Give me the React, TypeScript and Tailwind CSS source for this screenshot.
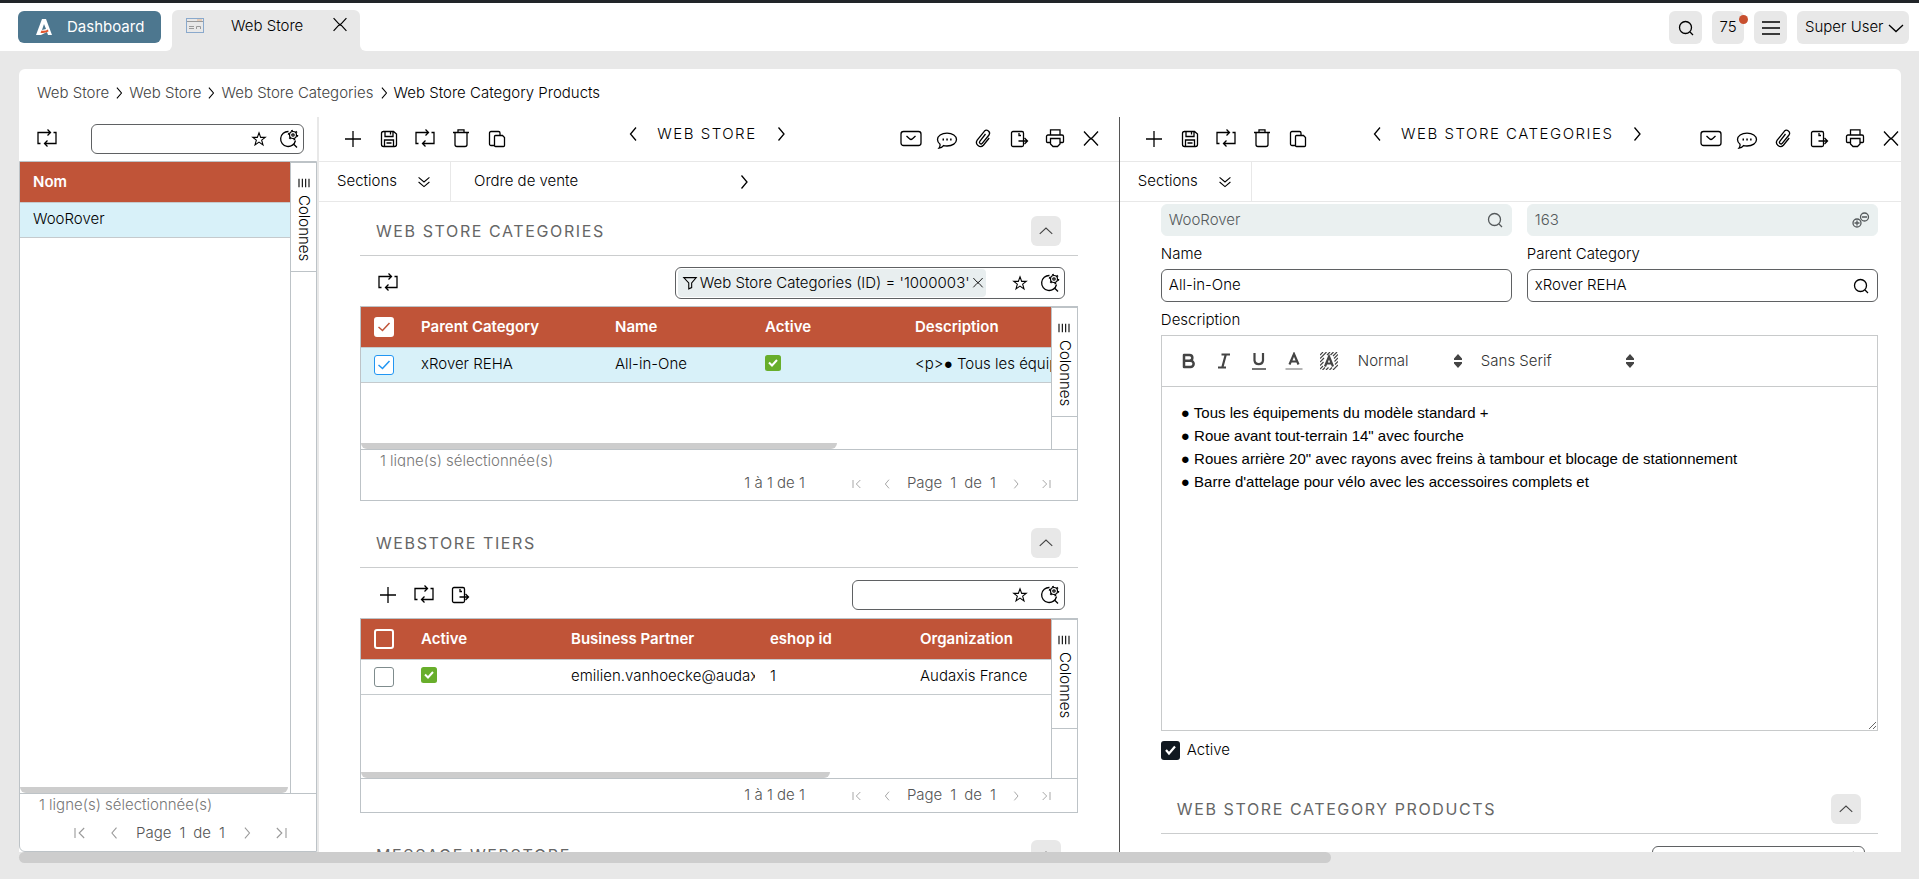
import { useState } from "react";
import type { ReactNode } from "react";
import clsx from "clsx";

const ICONS: Record<string, ReactNode> = {
  plus: <path d="M4 12H20M12 4V20" />,
  save: (
    <path d="M6 4.5H16.5L19.5 7V17.5a2 2 0 0 1-2 2H6.5a2 2 0 0 1-2-2V6.5a2 2 0 0 1 2-2ZM8 5V9.5H16V5M13.5 5V7.5M7.5 19V13H16.5V19M9.5 16H14.5" />
  ),
  refresh: (
    <path d="M5.5 16.5H3V5.5H15.5M12.5 2.5L15.5 5.5L12.5 8.5M18.5 5.5H21V16.5H9.5M12.5 13.5L9.5 16.5L12.5 19.5" />
  ),
  trash: (
    <path d="M4 5.5H20M9 5V2.8H15V5M6 6V17.5a2 2 0 0 0 2 2H16a2 2 0 0 0 2-2V6" />
  ),
  copy: (
    <path d="M9.5 18.5H6a1.5 1.5 0 0 1-1.5-1.5V6a1.5 1.5 0 0 1 1.5-1.5H13.5a1.5 1.5 0 0 1 1.5 1.5V8.5M10.5 8.5H17.5L19.5 10.5V18.5a1 1 0 0 1-1 1H10.5a1 1 0 0 1-1-1V9.5a1 1 0 0 1 1-1Z" />
  ),
  mail: (
    <>
      <rect x="2" y="4.5" width="20" height="14" rx="2.5" />
      <path d="M7.5 9L10.5 11.8a2.2 2.2 0 0 0 3 0L16.5 9" />
    </>
  ),
  chat: (
    <>
      <path d="M5 17.2C3.2 16 2.5 14.3 2.5 12.6C2.5 9 6.5 6.2 12 6.2S21.5 9 21.5 12.6S17.5 19 12 19C10.7 19 9.5 18.9 8.5 18.6C7.5 20 6 21 4 21.2C5 20 5.3 18.5 5 17.2Z" />
      <path d="M7.5 12.5h1.5M11.3 12.5h1.5M15.1 12.5h1.5" strokeWidth="2" />
    </>
  ),
  clip: (
    <path d="M14.5 7L8.8 14.4a1.5 1.5 0 0 0 2.4 1.9L18 8a3 3 0 0 0-4.700-3.700L6.200 13.200a4 4 0 0 0 6.200 5L18.200 11" />
  ),
  exit: (
    <>
      <rect x="4.500" y="4.500" width="12" height="15" rx="1.500" />
      <path d="M12 6V8.500H14M11.500 14H20.500M17.500 11L20.500 14L17.500 17" />
    </>
  ),
  print: (
    <path d="M7.500 8V2.800H17V8M7 15.500H4.500a1 1 0 0 1-1-1V9.500a1.500 1.500 0 0 1 1.500-1.500H19a1.500 1.500 0 0 1 1.500 1.500V14.500a1 1 0 0 1-1 1H17.500M7.500 11.500H17V17L14.500 19.500H10L7.500 17Z" />
  ),
  close: <path d="M5 4.500L10.500 10.500Q12 12 13.500 10.500L19 4.500M5 18.500L10.500 12.500Q12 11 13.500 12.500L19 18.500" />,
  left: <path d="M15 5.500L9.500 12L15 18.500" />,
  right: <path d="M9.500 5.500L15 12L9.500 18.500" />,
  down: <path d="M5 9L12 15.500L19 9" />,
  up: <path d="M4.500 15.500L12 8.500L19.500 15.500" />,
  first: <path d="M6 6V18M17 6L11 12L17 18" />,
  last: <path d="M18 6V18M7 6L13 12L7 18" />,
  double: <path d="M5.500 6.500L12 12L18.500 6.500M5.500 12L12 17.500L18.500 12" />,
  star: (
    <path d="M12 4.500L14 10H19.500L15.200 13.300L16.800 19L12 15.700L7.200 19L8.800 13.300L4.500 10H10Z" />
  ),
  search: (
    <>
      <circle cx="11.500" cy="11.500" r="6" />
      <path d="M16 16L19 19" />
    </>
  ),
  advanced: (
    <>
      <path d="M11.500 4.500A7.500 7.500 0 1 0 18.500 13.500M16.500 17L20 20.500" />
      <circle cx="16" cy="8" r="3.500" strokeWidth="1.200" />
      <circle cx="16" cy="8" r="1.200" strokeWidth="1.200" />
      <circle cx="16" cy="8" r="4.500" strokeWidth="1.500" strokeDasharray="1.700 3" />
    </>
  ),
  filter: <path d="M4.500 5.500H19.500L14 12V17.500L10.500 19V12Z" />,
  zoomPair: (
    <>
      <circle cx="8" cy="15" r="4" />
      <circle cx="15.500" cy="9" r="4" />
      <path d="M5.500 15H10.500M8 12.500V17.500M13 9H18" />
    </>
  ),
  menu: <path d="M3 6H21M3 12H21M3 18H21" />,
  columns: <path d="M6 7V17M10 7V17M14 7V17M18 7V17" />,
};

function Icon({ name, size = "size-6", stroke = 1.3, className }: { name: string; size?: string; stroke?: number; className?: string }) {
  return (
    <svg
      viewBox="0 0 24 24"
      className={clsx("shrink-0", size, className)}
      fill="none"
      stroke="currentColor"
      strokeWidth={stroke}
      aria-hidden="true"
    >
      {ICONS[name]}
    </svg>
  );
}

function IconButton({ name, label, size, className }: { name: string; label: string; size?: string; className?: string }) {
  return (
    <button type="button" aria-label={label} className={clsx("flex shrink-0 cursor-pointer", className)}>
      <Icon name={name} size={size} />
    </button>
  );
}

function SearchBox({ children, label, className }: { children?: ReactNode; label: string; className?: string }) {
  return (
    <div className={clsx("flex items-center rounded-md border border-[#5f6163] bg-white pr-0.5", className)}>
      {children}
      <input aria-label={label} className="min-w-0 flex-1 px-2 outline-none" />
      <IconButton name="star" label="Favoris" size="size-5" className="mr-2" />
      <IconButton name="advanced" label="Recherche avancée" size="size-6" />
    </div>
  );
}

function GridCheckbox({ variant, label }: { variant: "header" | "headerChecked" | "row" | "rowChecked"; label: string }) {
  const [checked, setChecked] = useState(variant === "headerChecked" || variant === "rowChecked");
  const header = variant === "header" || variant === "headerChecked";
  return (
    <label className="relative block size-5">
      <input
        type="checkbox"
        aria-label={label}
        checked={checked}
        onChange={() => setChecked(!checked)}
        className={clsx(
          "block size-5 appearance-none rounded-[3px]",
          header ? "border-2 border-white" : checked ? "border border-[#2196f3] bg-white" : "border border-[#7f8c8d] bg-white",
          header && checked && "bg-white"
        )}
      />
      {checked && (
        <svg
          viewBox="0 0 20 20"
          className={clsx("pointer-events-none absolute inset-0", header ? "text-[#c05438]" : "text-[#2196f3]")}
          fill="none"
          stroke="currentColor"
          strokeWidth="1.500"
        >
          <path d="M4.500 10L8.500 13.500L15.500 6" />
        </svg>
      )}
    </label>
  );
}

function GreenCheck() {
  return (
    <svg viewBox="0 0 16 16" className="mb-1 block size-4" role="img" aria-label="Oui">
      <rect width="16" height="16" rx="2.500" fill="#68ae2b" />
      <path d="M4 7.500L7 10.500L12 5" fill="none" stroke="#fff" strokeWidth="2" />
    </svg>
  );
}

function ColumnsTab() {
  return (
    <div className="w-[26px] shrink-0 border-l border-[#bdc3c7]">
      <button
        type="button"
        className="flex h-[110px] w-full flex-col items-center border-y border-[#bdc3c7] pt-2.5 text-[15px]"
      >
        <Icon name="columns" size="size-5" />
        <span className="mt-0.5 [writing-mode:vertical-rl]">Colonnes</span>
      </button>
    </div>
  );
}

function Pager({ size = "size-4" }: { size?: string }) {
  return (
    <nav aria-label="Pagination" className="flex items-center text-[#555]">
      <IconButton name="first" label="Première page" size={size} className="mr-3.5 text-[#999]" />
      <IconButton name="left" label="Page précédente" size={size} className="mr-3 text-[#999]" />
      <span className="flex gap-2">
        <span>Page</span>
        <span>1</span>
        <span>de</span>
        <span>1</span>
      </span>
      <IconButton name="right" label="Page suivante" size={size} className="ml-3 text-[#999]" />
      <IconButton name="last" label="Dernière page" size={size} className="ml-3.5 text-[#999]" />
    </nav>
  );
}

type Column = { title: ReactNode; width: string; cell: ReactNode; pad?: string };

function DataTable({ columns, selected }: { columns: Column[]; selected?: boolean }) {
  return (
    <table className="w-full table-fixed border-collapse text-left">
      <thead>
        <tr className="h-10 bg-[#c05438] text-white">
          {columns.map((c, i) => (
            <th key={i} className={clsx("overflow-hidden font-semibold whitespace-nowrap", c.pad ?? "pl-[15px]", c.width)}>
              {c.title}
            </th>
          ))}
        </tr>
      </thead>
      <tbody>
        <tr className={clsx("h-[35px] border-y border-[#c5cacd]", selected && "bg-[#d8f1f9]")}>
          {columns.map((c, i) => (
            <td key={i} className={clsx("overflow-hidden whitespace-nowrap text-black", c.pad ?? "pl-[15px]")}>
              {c.cell}
            </td>
          ))}
        </tr>
      </tbody>
    </table>
  );
}

function SectionHeader({ title }: { title: string }) {
  return (
    <div className="flex h-10 items-start justify-between border-b border-[#cbcdce] pr-[17px] pl-4">
      <h2 className="text-base leading-[30px] font-normal tracking-widest text-[#666]">{title}</h2>
      <button type="button" aria-label="Replier" className="grid size-[30px] place-items-center rounded-md bg-[#e8e8e8] text-[#444]">
        <Icon name="up" size="size-5" />
      </button>
    </div>
  );
}

function GridSection({
  title,
  tools,
  search,
  columns,
  selected,
  thumb,
  status,
}: {
  title: string;
  tools: ReactNode;
  search: ReactNode;
  columns: Column[];
  selected?: boolean;
  thumb: string;
  status?: string;
}) {
  return (
    <section className="mb-[27px]">
      <SectionHeader title={title} />
      <div className="flex h-[50px] items-center justify-between pt-1 pr-[13px] pl-4">
        <div className="flex gap-3">{tools}</div>
        {search}
      </div>
      <div className="flex h-[195px] flex-col border border-[#bdc3c7]">
        <div className="flex min-h-0 flex-1">
          <div className="flex min-w-0 flex-1 flex-col justify-between overflow-hidden">
            <DataTable columns={columns} selected={selected} />
            <div className={clsx("h-1.5 rounded-b-md bg-[#cdcdcd]", thumb)} />
          </div>
          <ColumnsTab />
        </div>
        <div className="border-t border-[#bdc3c7] pr-[23px] pl-[19px]">
          {status && <p className="h-[17px] overflow-hidden leading-[22px] text-[#777]">{status}</p>}
          <div className="flex h-[33px] items-center justify-end gap-11 text-[#555]">
            <span>1 à 1 de 1</span>
            <Pager />
          </div>
        </div>
      </div>
    </section>
  );
}

function PaneToolbar({ title }: { title: string }) {
  return (
    <div className="flex h-[45px] items-center justify-between border-b border-[#e8e8e8] pr-4 pl-[22px]">
      <div className="flex gap-3">
        <IconButton name="plus" label="Nouveau" />
        <IconButton name="save" label="Enregistrer" />
        <IconButton name="refresh" label="Rafraîchir" />
        <IconButton name="trash" label="Supprimer" />
        <IconButton name="copy" label="Copier" />
      </div>
      <div className="mb-2.5 ml-1.5 flex items-center gap-3">
        <IconButton name="left" label="Précédent" />
        <h1 className="tracking-widest">{title}</h1>
        <IconButton name="right" label="Suivant" />
      </div>
      <div className="flex gap-3">
        <IconButton name="mail" label="E-mail" />
        <IconButton name="chat" label="Commentaires" />
        <IconButton name="clip" label="Pièces jointes" />
        <IconButton name="exit" label="Exporter" />
        <IconButton name="print" label="Imprimer" />
        <IconButton name="close" label="Fermer" />
      </div>
    </div>
  );
}

function SectionsBar({ children }: { children?: ReactNode }) {
  return (
    <div className="flex h-10 items-center border-b border-[#e8e8e8]">
      <button type="button" className="flex h-full w-[132px] items-center justify-between border-r border-[#e8e8e8] pr-4 pl-[18px]">
        Sections
        <Icon name="double" size="size-5" />
      </button>
      {children}
    </div>
  );
}

function Field({ id, label, value, disabled, icon }: { id: string; label?: string; value: string; disabled?: boolean; icon?: string }) {
  return (
    <div>
      {label && (
        <label htmlFor={id} className="block h-[33px] pt-[7px] leading-[22px]">
          {label}
        </label>
      )}
      <div
        className={clsx(
          "flex items-center rounded-md border pr-1 pl-[7px]",
          disabled ? "h-8 border-[#eaf0f0] bg-[#eaf0f0] text-[#555a5c]" : "h-[33px] border-[#5f6163]"
        )}
      >
        <input
          id={id}
          aria-label={label ? undefined : id}
          defaultValue={value}
          disabled={disabled}
          className="min-w-0 flex-1 outline-none"
        />
        {icon && <IconButton name={icon} label="Rechercher" size="size-6" />}
      </div>
    </div>
  );
}

function FormatSelect({ label, value, className }: { label: string; value: string; className?: string }) {
  return (
    <div className={clsx("relative flex items-center text-[#333]", className)}>
      <select aria-label={label} className="w-full appearance-none outline-none">
        <option>{value}</option>
      </select>
      <svg viewBox="0 0 8 14" className="pointer-events-none absolute right-0 h-3.5 w-2" fill="#444">
        <path d="M4 0L8 4.500V6H0V4.500ZM4 14L0 9.500V8H8V9.500Z" />
      </svg>
    </div>
  );
}

const DESCRIPTION = [
  "● Tous les équipements du modèle standard +",
  '● Roue avant tout-terrain 14" avec fourche',
  '● Roues arrière 20" avec rayons avec freins à tambour et blocage de stationnement',
  "● Barre d'attelage pour vélo avec les accessoires complets et",
].join("\n");

function Editor() {
  return (
    <div className="border border-[#c8cacb]">
      <div className="flex h-[51px] items-center border-b border-[#c8cacb] pl-[18px] text-[#444]">
        <div className="flex gap-[17px]">
          <button type="button" aria-label="Gras" className="size-[18px]">
            <svg viewBox="0 0 18 18" fill="none" stroke="currentColor" strokeWidth="2.500" strokeLinejoin="round">
              <path d="M4 3H9.500A2.800 2.800 0 0 1 9.500 8.700H4ZM4 8.700H10.500A3 3 0 0 1 10.500 15H4Z" />
            </svg>
          </button>
          <button type="button" aria-label="Italique" className="size-[18px]">
            <svg viewBox="0 0 18 18" fill="none" stroke="currentColor" strokeWidth="2.200">
              <path d="M6.500 2.500H15M3 15.500H11M10.800 2.500L7.300 15.500" />
            </svg>
          </button>
          <button type="button" aria-label="Souligné" className="size-[18px]">
            <svg viewBox="0 0 18 18" fill="none" stroke="currentColor">
              <path d="M4.500 1V8.500A4.300 4.300 0 0 0 13 8.500V1" strokeWidth="2.200" />
              <path d="M2 17H16" strokeWidth="1.500" />
            </svg>
          </button>
          <button type="button" aria-label="Couleur du texte" className="size-[18px]">
            <svg viewBox="0 0 18 18" fill="none" stroke="currentColor">
              <path d="M4.500 12.500L9 2L13.500 12.500M6 9.500H12" strokeWidth="2.200" />
              <path d="M0.500 17H17.500" stroke="#b5b5b5" strokeWidth="2" />
            </svg>
          </button>
          <button type="button" aria-label="Couleur de fond" className="size-[18px]">
            <svg viewBox="0 0 18 18" fill="none" stroke="currentColor">
              <path
                d="M0 3L3 0M0 6.500L6.500 0M0 10L4 6M7 3L10 0M0 13.500L3.500 10M10.500 3L13.500 0M0 17L3 14M13 4L17 0M2.500 18L5 15.500M14 6.500L18 2.500M14.500 9.500L18 6M6 18L8.500 15.500M15 12.500L18 9.500M9.500 18L12 15.500M13 18L18 13"
                strokeWidth="1.200"
              />
              <path d="M5 14.500L9 4.500L13 14.500M6 11.500H12" strokeWidth="2.200" />
            </svg>
          </button>
        </div>
        <FormatSelect label="Style" value="Normal" className="ml-5 w-[104px]" />
        <FormatSelect label="Police" value="Sans Serif" className="ml-[19px] w-[153px]" />
      </div>
      <textarea
        aria-label="Description"
        defaultValue={DESCRIPTION}
        className="block h-[343px] w-full resize-y px-[19px] py-3.5 font-['Liberation_Sans',sans-serif] text-[15px] leading-[23px] text-black outline-none"
      />
    </div>
  );
}

function TopBar() {
  return (
    <header className="flex h-[51px] shrink-0 items-start border-t-[3px] border-[#212529] bg-white pl-[18px]">
      <button type="button" className="mt-2 flex h-8 w-[143px] items-center rounded-md bg-[#4d778f] pl-[18px] font-normal text-white">
        <svg viewBox="0 0 16 18" className="mr-[15px] h-[18px] w-4">
          <path d="M6 1H10L16 17H12L11 14L5 17H0Z" fill="#fff" />
          <path d="M8 6L10 11L6 12Z" fill="#4d778f" />
          <path d="M5.500 12.500Q9 13.500 12 11.500L12.500 13.500Q9 15.500 4.500 14.800Z" fill="#e2552c" />
        </svg>
        Dashboard
      </button>
      <div className="relative mt-[7px] ml-[11px] flex h-[41px] w-[188px] items-start rounded-t-md bg-[#e8e8e8] pt-1 pl-3.5">
        <span className="absolute bottom-0 -left-1.5 size-1.5 bg-[#e8e8e8]">
          <span className="block size-full rounded-br-md bg-white" />
        </span>
        <span className="absolute -right-1.5 bottom-0 size-1.5 bg-[#e8e8e8]">
          <span className="block size-full rounded-bl-md bg-white" />
        </span>
        <svg viewBox="0 0 18 15" className="mt-1 h-[15px] w-[18px]" fill="none" stroke="#999">
          <rect x="0.500" y="0.500" width="17" height="14" stroke="#8aa9cc" />
          <path d="M1 3.500H17M3 8.500H8M3 10.500H8M10.500 11V8.500H14.500V11" />
          <path d="M11 2H16" stroke="#ddb08c" />
        </svg>
        <span className="ml-[27px] leading-[23px]">Web Store</span>
        <IconButton name="close" label="Fermer l'onglet" size="size-[22px]" className="ml-[26px]" />
      </div>
      <div className="mt-2 mr-2.5 ml-auto flex h-[33px] gap-2.5">
        <button type="button" aria-label="Rechercher" className="grid w-[33px] place-items-center rounded-md bg-[#e8e8e8]">
          <Icon name="search" size="size-6" />
        </button>
        <button type="button" className="relative w-8 rounded-md bg-[#e8e8e8]">
          75
          <span className="absolute top-1 -right-1 size-[9px] rounded-full bg-[#c8502f]" />
        </button>
        <button type="button" aria-label="Menu" className="grid w-[33px] place-items-center rounded-md bg-[#e8e8e8]">
          <Icon name="menu" size="size-6" />
        </button>
        <button type="button" className="flex w-28 items-center justify-between rounded-md bg-[#e8e8e8] pr-1 pl-2 whitespace-nowrap">
          Super User
          <Icon name="down" size="size-6" />
        </button>
      </div>
    </header>
  );
}

function Breadcrumb() {
  const parents = ["Web Store", "Web Store", "Web Store Categories"];
  return (
    <nav aria-label="Fil d'Ariane" className="flex h-12 items-center pl-[18px] text-[#444]">
      {parents.map((p, i) => (
        <span key={i} className="flex items-center">
          <a href="#">{p}</a>
          <Icon name="right" size="size-5" className="text-black" />
        </span>
      ))}
      <a href="#" className="text-black">
        Web Store Category Products
      </a>
    </nav>
  );
}

export default function App() {
  return (
    <div className="flex h-screen flex-col overflow-hidden bg-[#e8e8e8] font-['Inter',sans-serif] text-[15px] font-light text-black">
      <TopBar />
      <main className="mt-[18px] mr-[18px] mb-4 ml-[19px] flex min-h-0 flex-1 flex-col">
        <div className="flex min-h-0 flex-1 flex-col overflow-hidden rounded-t-md bg-white">
          <Breadcrumb />
          <div className="flex min-h-0 flex-1">
            {/* Record list */}
            <aside className="flex w-[300px] shrink-0 flex-col border-r-2 border-[#e8e8e8]">
              <div className="flex h-11 items-center justify-between pr-[13px] pl-4">
                <IconButton name="refresh" label="Rafraîchir" />
                <SearchBox label="Rechercher" className="h-[30px] w-[213px]" />
              </div>
              <div className="flex min-h-0 flex-1 flex-col rounded-bl-md border border-[#bdc3c7]">
                <div className="flex min-h-0 flex-1">
                  <div className="flex flex-1 flex-col justify-between">
                    <DataTable selected columns={[{ title: "Nom", width: "w-full", cell: "WooRover", pad: "pl-[13px]" }]} />
                    <div className="mr-0.5 h-1.5 rounded-b-md bg-[#cdcdcd]" />
                  </div>
                  <ColumnsTab />
                </div>
                <div className="h-[58px] border-t border-[#bdc3c7]">
                  <p className="pl-[19px] leading-[22px] text-[#777]">1 ligne(s) sélectionnée(s)</p>
                  <div className="flex h-[34px] items-center pl-[50px]">
                    <Pager size="size-5" />
                  </div>
                </div>
              </div>
            </aside>

            {/* Web Store */}
            <div className="flex w-[42.5%] shrink-0 flex-col">
              <PaneToolbar title="WEB STORE" />
              <SectionsBar>
                <button type="button" className="flex items-center pl-[23px]">
                  <span className="w-[258px] text-left">Ordre de vente</span>
                  <Icon name="right" size="size-6" />
                </button>
              </SectionsBar>
              <div className="min-h-0 flex-1 overflow-hidden px-[41px] pt-3.5">
                <GridSection
                  title="WEB STORE CATEGORIES"
                  tools={<IconButton name="refresh" label="Rafraîchir" />}
                  search={
                    <SearchBox label="Filtrer les catégories" className="h-8 w-[390px] pl-0.5">
                      <span className="flex h-7 shrink-0 items-center rounded bg-[#e8eeef] pl-0.5 whitespace-nowrap">
                        <Icon name="filter" size="size-5" />
                        Web Store Categories (ID) = '1000003'
                        <IconButton name="close" label="Retirer le filtre" size="size-4" />
                      </span>
                    </SearchBox>
                  }
                  selected
                  thumb="w-[69%]"
                  status="1 ligne(s) sélectionnée(s)"
                  columns={[
                    { title: <GridCheckbox variant="headerChecked" label="Tout sélectionner" />, width: "w-[45px]", cell: <GridCheckbox variant="rowChecked" label="Sélectionner la ligne" />, pad: "pl-[13px]" },
                    { title: "Parent Category", width: "w-[194px]", cell: "xRover REHA" },
                    { title: "Name", width: "w-[150px]", cell: "All-in-One" },
                    { title: "Active", width: "w-[150px]", cell: <GreenCheck /> },
                    {
                      title: "Description",
                      width: "w-auto",
                      cell: (
                        <>
                          &lt;p&gt;<span className="font-['Liberation_Sans']">●</span> Tous les équipements
                        </>
                      ),
                    },
                  ]}
                />
                <GridSection
                  title="WEBSTORE TIERS"
                  tools={
                    <>
                      <IconButton name="plus" label="Nouveau" />
                      <IconButton name="refresh" label="Rafraîchir" />
                      <IconButton name="exit" label="Exporter" />
                    </>
                  }
                  search={<SearchBox label="Filtrer les tiers" className="h-[30px] w-[213px]" />}
                  thumb="w-[68%]"
                  columns={[
                    { title: <GridCheckbox variant="header" label="Tout sélectionner" />, width: "w-[45px]", cell: <GridCheckbox variant="row" label="Sélectionner la ligne" />, pad: "pl-[13px]" },
                    { title: "Active", width: "w-[150px]", cell: <GreenCheck /> },
                    { title: "Business Partner", width: "w-[199px]", cell: "emilien.vanhoecke@audaxis.com" },
                    { title: "eshop id", width: "w-[150px]", cell: "1" },
                    { title: "Organization", width: "w-auto", cell: "Audaxis France" },
                  ]}
                />
                <SectionHeader title="MESSAGE WEBSTORE" />
              </div>
            </div>

            {/* Web Store Categories */}
            <div className="flex w-[42.5%] shrink-0 flex-col border-l border-[#555]">
              <PaneToolbar title="WEB STORE CATEGORIES" />
              <SectionsBar />
              <div className="min-h-0 flex-1 overflow-hidden px-[41px] pt-0.5">
                <div className="grid grid-cols-2 gap-x-[15px]">
                  <Field id="store" value="WooRover" disabled icon="search" />
                  <Field id="sequence" value="163" disabled icon="zoomPair" />
                  <Field id="name" label="Name" value="All-in-One" />
                  <Field id="parent" label="Parent Category" value="xRover REHA" icon="search" />
                </div>
                <p className="h-[33px] pt-[7px] leading-[22px]">Description</p>
                <Editor />
                <label className="mt-2 flex items-center gap-[7px]">
                  <span className="relative size-[19px]">
                    <input type="checkbox" defaultChecked className="block size-[19px] appearance-none rounded-[3px] bg-[#101820]" />
                    <svg viewBox="0 0 19 19" className="pointer-events-none absolute inset-0" fill="none" stroke="#fff" strokeWidth="2.200">
                      <path d="M5 9L8 12.500L14 5.500" />
                    </svg>
                  </span>
                  Active
                </label>
                <div className="mt-8">
                  <SectionHeader title="WEB STORE CATEGORY PRODUCTS" />
                  <div className="flex justify-end pt-3 pr-[13px]">
                    <SearchBox label="Filtrer les produits" className="h-[30px] w-[213px]" />
                  </div>
                </div>
              </div>
            </div>
          </div>
        </div>
        <div className="h-[11px] w-[69.7%] rounded-full bg-[#cdcdcd]" />
      </main>
    </div>
  );
}
